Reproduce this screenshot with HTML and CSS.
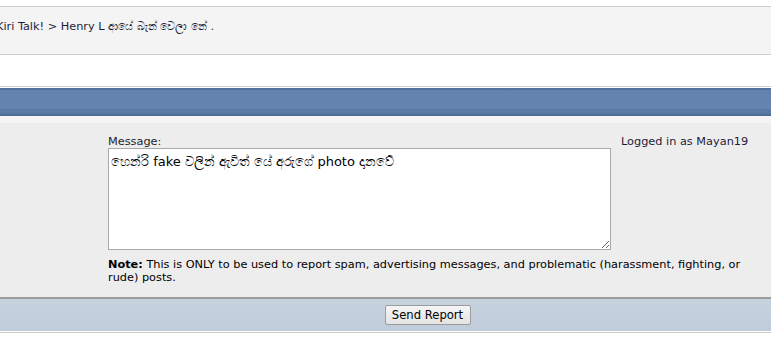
FILE: index.html
```html
<!DOCTYPE html>
<html>
<head>
<meta charset="utf-8">
<link rel="stylesheet" href="styles.css">
</head>
<body>
<div class="topgap"></div>
<div class="crumbbar">
  <div class="crumb">Kiri Talk! &gt; Henry L ආයේ බැන් වෙලා නේ .</div>
</div>
<div class="spacer"></div>
<div class="bluebar"></div>
<div class="lightstrip"></div>
<div class="formarea">
  <div class="leftcol"></div>
  <div class="midcol">
    <div class="label">Message:</div>
    <textarea class="msg">හෙන්රි fake වලින් ඇවිත් යේ අරුගේ photo දානවේ</textarea>
    <div class="note"><b>Note:</b> This is ONLY to be used to report spam, advertising messages, and problematic (harassment, fighting, or<br>rude) posts.</div>
  </div>
  <div class="rightcol">Logged in as Mayan19</div>
</div>
<div class="buttonbar">
  <button class="send">Send Report</button>
</div>
<div class="bottomline"></div>
</body>
</html>
```

FILE: styles.css
```css
html, body {
  margin: 0;
  padding: 0;
  background: #ffffff;
  font-family: "DejaVu Sans", Verdana, sans-serif;
  font-size: 11.3px;
  color: #000;
  overflow: hidden;
}
.topgap {
  height: 6px;
  background: #fff;
}
.crumbbar {
  height: 47px;
  background: #f4f4f4;
  border-top: 1px solid #cfcfcf;
  border-bottom: 1px solid #cfcfcf;
}
.crumb {
  margin-left: -4px;
  padding-top: 13px;
  line-height: 14px;
  color: #1d1d3a;
  white-space: nowrap;
}
.spacer {
  height: 31px;
  border-bottom: 1px solid #cdcdcd;
  margin-bottom: 1px;
}
.bluebar {
  height: 24px;
  border-top: 2px solid #52719c;
  border-bottom: 2px solid #4e6c97;
  background: linear-gradient(to bottom, #6283ae 0, #6585b0 80%, #5a7aa5 80%, #5a7aa5 100%);
}
.lightstrip {
  height: 7px;
  background: #f5f5f5;
}
.formarea {
  display: grid;
  grid-template-columns: 108px 503px 1fr;
  background: #eeeded;
  height: 176px;
  padding-top: 12px;
  box-sizing: border-box;
  border-bottom: 2px solid #9a9a9a;
}
.label {
  line-height: 13px;
  color: #1d1d2a;
}
.msg {
  display: block;
  width: 503px;
  height: 102px;
  box-sizing: border-box;
  margin: 0;
  padding: 5px 2px 3px;
  border: 1px solid #a9a9a9;
  background: #fff;
  font-family: "DejaVu Sans", Verdana, sans-serif;
  font-size: 13px;
  color: #000;
  resize: vertical;
}
.note {
  margin-top: 8px;
  line-height: 13px;
  white-space: nowrap;
}
.rightcol {
  padding-left: 10px;
  line-height: 13px;
  color: #1d1d3a;
  white-space: nowrap;
}
.buttonbar {
  height: 32px;
  background: linear-gradient(to bottom, #c7d2df, #c0ccdb);
  border-bottom: 1px solid #ffffff;
  display: flex;
  justify-content: center;
  align-items: center;
  padding-left: 84px;
}
.bottomline {
  height: 1px;
  background: #cccccc;
}
.send {
  height: 20px;
  width: 86px;
  font-family: "DejaVu Sans", Verdana, sans-serif;
  font-size: 11.6px;
  color: #000;
  background: linear-gradient(to bottom, #f6f6f6, #e3e3e3);
  border: 1px solid #9c9c9c;
  border-radius: 2px;
  padding: 0;
}
```
